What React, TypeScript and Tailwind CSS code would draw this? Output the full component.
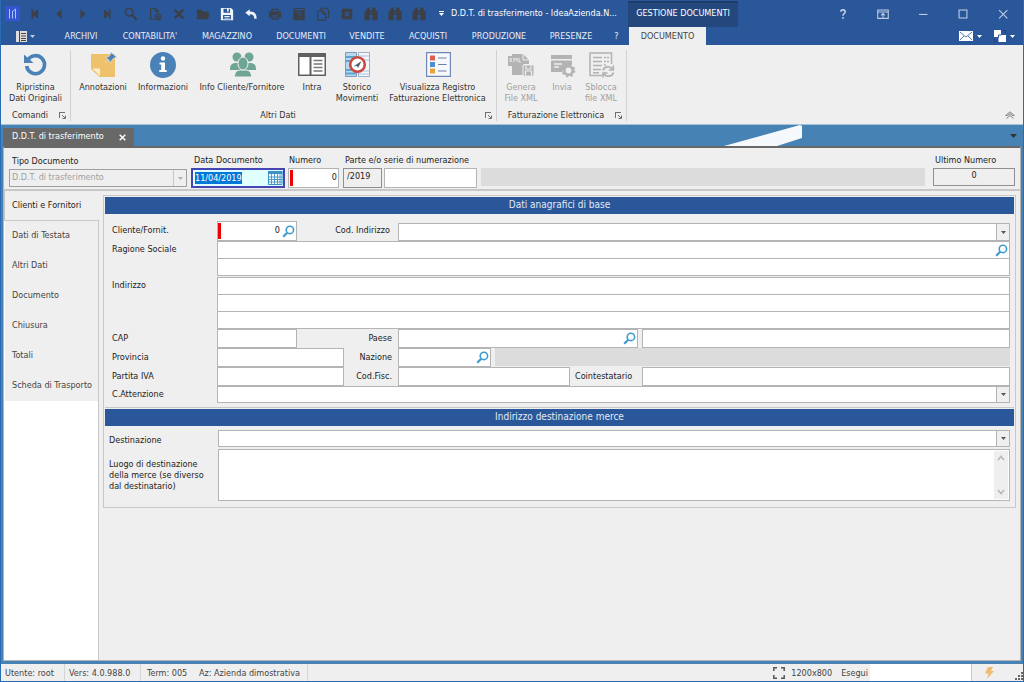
import { useEffect, useRef, type ReactNode } from "react";

/* ---------- small drawing helpers ---------- */

function Svg({ children, className = "size-[14px]", box = "0 0 16 16" }: { children: ReactNode; className?: string; box?: string }) {
  return (
    <svg viewBox={box} className={"block shrink-0 " + className} fill="currentColor" aria-hidden="true">
      {children}
    </svg>
  );
}

function Caret({ className = "" }: { className?: string }) {
  return (
    <Svg className={"h-[3px] w-[5px] " + className} box="0 0 5 3">
      <path d="M0 0h5L2.5 3z" />
    </Svg>
  );
}

function Launcher() {
  return (
    <button aria-label="Opzioni gruppo" className="text-[#707070]">
      <Svg className="size-[7px]" box="0 0 7 7">
        <path d="M0 0h6v1H1v5H0z" />
        <path d="M3 3l3 3M6.5 3.5v3h-3" fill="none" stroke="currentColor" />
      </Svg>
    </button>
  );
}

function Lens() {
  return (
    <Svg className="size-[13px] text-[#3f9bcb]" box="0 0 13 13">
      <circle cx="7.9" cy="4.9" r="3.7" fill="none" stroke="currentColor" strokeWidth="1.6" />
      <path d="M5.2 7.8L1.2 11.8" stroke="currentColor" strokeWidth="2.2" />
    </Svg>
  );
}

const binoculars = (
  <>
    <path d="M3 0.500h3.500v3h3v-3H13v3l2.500 2v9.500h-6V8.500h-3V15h-6V5.500l2.500-2z" />
    <path d="M7.300 5h1.400v2H7.300z" fill="#2a579a" />
  </>
);

const quickTools: { name: string; light?: boolean; icon: ReactNode }[] = [
  { name: "Primo", icon: <path d="M4 2.500h2v4.500L11.500 2.500v11L6 9v4.500H4z" /> },
  { name: "Precedente", icon: <path d="M11 2.500v11L5 8z" /> },
  { name: "Successivo", icon: <path d="M5 2.500v11L11 8z" /> },
  { name: "Ultimo", icon: <path d="M12 2.500h-2v4.500L4.500 2.500v11L10 9v4.500h2z" /> },
  {
    name: "Cerca",
    icon: (
      <g fill="none" stroke="currentColor">
        <circle cx="6" cy="6" r="4.300" strokeWidth="1.700" />
        <path d="M9.500 9.500l5 5" strokeWidth="2.600" />
      </g>
    ),
  },
  {
    name: "Nuovo",
    icon: (
      <g fill="none" stroke="currentColor" strokeWidth="1.300">
        <path d="M7.500 14H3V1.700h5.500L12 5v2.500M8.500 1.700V5H12" />
        <circle cx="11.500" cy="11.500" r="3.200" />
        <path d="M9.500 11.500h4M11.500 9.500v4" />
      </g>
    ),
  },
  { name: "Elimina", icon: <path d="M3 3l10 10M13 3L3 13" stroke="currentColor" strokeWidth="2.800" /> },
  { name: "Apri", icon: <path d="M1 14V3h5l1.500 2H14v2.500h2L13.500 14z" /> },
  {
    name: "Salva",
    light: true,
    icon: <path fillRule="evenodd" d="M1 1h11.500L15 3.500V15H1zM4 2v4.500h7.500V2H10v3H8V2zM3.500 9v5h9V9zM5 10.300h6v1H5zm0 1.900h6v1H5z" />,
  },
  { name: "Annulla", light: true, icon: <path d="M1.500 6.500L6.500 2.500v2.800C11.500 5 14.500 7.500 14.500 13.500h-2.700C11.800 9.700 10 8.200 6.500 8.200v2.500z" /> },
  {
    name: "Stampa",
    icon: <path fillRule="evenodd" d="M4 2h8v3h3v7h-3v2.500H4V12H1V5h3zm1.300 1.300V5h5.400V3.300zM5.300 9v4.200h5.400V9zM6 10h4v.8H6zm0 1.600h4v.8H6zM12 6.500h1.500v1H12z" />,
  },
  {
    name: "Guida",
    icon: (
      <>
        <path d="M1.500 3C1.500 1.500 2.500 1 4 1h10.500v14H1.500z" />
        <path d="M2.500 3h11M6 7.500C6 5 10 5 10 7.500 10 9 8 9 8 11M8 12.300v1.200" fill="none" stroke="#2a579a" strokeWidth="1.200" />
      </>
    ),
  },
  {
    name: "Copia",
    icon: <path d="M5.500 4V1.500h6L14.500 4v8H11M2 4.500h6l3 3V15H2zM7.500 4.500V8H11" fill="none" stroke="currentColor" strokeWidth="1.200" />,
  },
  {
    name: "Chiudi scheda",
    icon: (
      <>
        <path d="M2 2h12v12H2z" />
        <path d="M5.500 5.500l5 5M10.500 5.500l-5 5" stroke="#2a579a" strokeWidth="1.500" />
      </>
    ),
  },
  { name: "Ricerca 1", icon: binoculars },
  { name: "Ricerca 2", icon: binoculars },
  { name: "Ricerca 3", icon: binoculars },
];

const windowTools: { name: string; icon: ReactNode }[] = [
  { name: "Aiuto", icon: <path d="M5.500 5.500C5.500 2.500 10.500 2.500 10.500 5.500 10.500 7.500 8 7.500 8 10M8 11.500v2" strokeWidth="1.800" /> },
  { name: "Barra multifunzione", icon: <path d="M2 3.500h12v9.500H2zM2 5.800h12M8 12V7.500M5.800 9.500L8 7.300l2.200 2.200" /> },
  { name: "Riduci", icon: <path d="M3.500 8.500h9.500" /> },
  { name: "Ingrandisci", icon: <path d="M3.500 3.500h9v9h-9z" /> },
  { name: "Chiudi", icon: <path d="M3.500 3.500l9.500 9.500M13 3.500L3.500 13" /> },
];

const menus = [
  { label: "ARCHIVI", width: "w-[58px]" },
  { label: "CONTABILITA'", width: "w-[80px]" },
  { label: "MAGAZZINO", width: "w-[74px]" },
  { label: "DOCUMENTI", width: "w-[74px]" },
  { label: "VENDITE", width: "w-[58px]" },
  { label: "ACQUISTI", width: "w-[64px]" },
  { label: "PRODUZIONE", width: "w-[78px]" },
  { label: "PRESENZE", width: "w-[66px]" },
  { label: "?", width: "w-[25px]" },
];

/* ---------- ribbon icons ---------- */

const icons = {
  restore: (
    <g transform="translate(1 0)">
      <path d="M4.700 8.200A9 9 0 1 1 3.600 14" fill="none" stroke="#4a82b8" strokeWidth="3.600" />
      <path d="M1 2.500V11h9.500z" fill="#4a82b8" />
    </g>
  ),
  note: (
    <g transform="translate(2 0)">
      <path d="M0 2h24v23H8.500L0 17z" fill="#eec26d" />
      <path d="M1.500 16.500H9V24z" fill="#fbeccb" />
      <path d="M19.500 0l6 5-1.500 1-.8-.3-2.700 2.600.2 2.700-6-5.700 2.700-.2 2.300-2.900zM17.500 7.500L14 10.500l4.300-2.200z" fill="#4a82b8" stroke="#efefef" strokeWidth=".5" />
    </g>
  ),
  info: (
    <g transform="translate(1 0)">
      <circle cx="13" cy="13" r="13" fill="#4a82b8" />
      <circle cx="13" cy="6.500" r="2.200" fill="#fff" />
      <path d="M9.500 10.500h5.500V18h1.700v2H9.300v-2h1.900v-5.500H9.500z" fill="#fff" />
    </g>
  ),
  people: (
    <g fill="#6fa594" transform="translate(2 0)">
      <circle cx="7" cy="5" r="4.500" />
      <circle cx="19" cy="5" r="4.500" />
      <path d="M0 17c0-4 2-6 6-6h3l4 7H0zM26 17c0-4-2-6-6-6h-3l-4 7h13z" />
      <g stroke="#efefef">
        <path d="M4.500 25c0-4.500 2-7 6-7h5c4 0 6 2.500 6 7z" />
        <ellipse cx="13" cy="11.500" rx="5" ry="6.500" />
      </g>
    </g>
  ),
  intra: (
    <>
      <path d="M0 1h28v23H0z" fill="#606060" />
      <path d="M1.500 5h10v17.500h-10zM13.500 5h13v17.500h-13z" fill="#fff" />
      <path d="M15.500 8.500h9M15.500 12h9M15.500 15.500h9M15.500 19h9" stroke="#777" strokeWidth="1.300" />
    </>
  ),
  history: (
    <g transform="translate(2 0)">
      <path d="M.5.500h11v24H.500z" fill="#b9d8ee" stroke="#7d9dba" />
      <path d="M13.500.500h11v24h-11z" fill="#f3f7fb" stroke="#9db2c8" />
      <path d="M1 5h10M1 9h10M1 18h10M1 21.500h10" stroke="#5fa3d3" strokeWidth="2" />
      <path d="M14 4h10M14 8h10M14 19h10M14 22h10" stroke="#a9c5dd" />
      <circle cx="12.500" cy="12.500" r="7.300" fill="#fff" stroke="#cc4940" strokeWidth="2.600" />
      <path d="M8.500 14.500l8-5.500-3.500 7-1-2z" fill="#4c5d70" />
    </g>
  ),
  registry: (
    <g transform="translate(2 0)">
      <path d="M.6.6h23.800v23.800H.6z" fill="#f7f9fd" stroke="#7088b8" strokeWidth="1.200" />
      <path d="M4 3.500h5v5H4z" fill="#d9604e" />
      <path d="M4 10h5v5H4z" fill="#4b8fd0" />
      <path d="M4 16.500h5v5H4z" fill="#e8a33d" />
      <path d="M12 6h8.500M12 12.500h8.500M12 19h8.500" stroke="#6d7fa8" strokeWidth="1.200" />
    </g>
  ),
  xml: (
    <g fill="#b3b3b3" transform="translate(1 0)">
      <path d="M4 2h11l6 6v4h-5v11H4v-9H0V4h4z" />
      <path d="M15 2v6h6" fill="none" stroke="#efefef" />
      <path d="M1.500 6l2.500 4M4 6l-2.500 4M6 10V6l1.500 2L9 6v4M11 6v4h2" fill="none" stroke="#efefef" strokeWidth=".9" />
      <path d="M15 13h11v11H15z" stroke="#efefef" />
      <path d="M18 14v3h5v-3M17.500 23v-4h6v4" fill="none" stroke="#efefef" strokeWidth="1.200" />
    </g>
  ),
  send: (
    <g fill="#b3b3b3" transform="translate(2 0)">
      <path d="M1 3h21v4H1zM1 8.500h21V13h-3l-4 2-2 4-1 1H1z" />
      <path d="M4 12h8M4 15h5" stroke="#efefef" strokeWidth="1.300" />
      <circle cx="18.500" cy="18.500" r="4.200" fill="#efefef" stroke="#b3b3b3" strokeWidth="2.600" />
      <circle cx="18.500" cy="18.500" r="5.900" fill="none" stroke="#b3b3b3" strokeWidth="2" strokeDasharray="2.300 2.340" />
    </g>
  ),
  unlock: (
    <g fill="none" stroke="#b3b3b3" transform="translate(2 0)">
      <path d="M13 23.500H1V1h21.500v11" strokeWidth="1.500" />
      <path d="M4 5.500h9M4 9.500h9M4 13.500h9M4 17.500h8M4 20.800h6" strokeWidth="1.500" />
      <path d="M15 5.500h5M15 9.500h5M15 13h3" strokeDasharray="2 1" strokeWidth="1.500" />
      <path d="M14 18.500c1-4 7-5 9.500-1.500M24.500 20.500c-1 4-7 5-9.500 1.500M24.300 13.500V18h-4.500M14 25.500V21h4.500" strokeWidth="1.700" />
    </g>
  ),
};

function RibbonButton({ icon, lines, width, disabled }: { icon: ReactNode; lines: string[]; width: string; disabled?: boolean }) {
  return (
    <button disabled={disabled} className={"flex shrink-0 flex-col items-center gap-1 pt-[2px] " + width + (disabled ? " text-[#a0a0a0]" : "")}>
      <Svg className="h-[26px] w-[28px]" box="0 0 28 26">
        {icon}
      </Svg>
      <span className="text-center leading-[11px] whitespace-nowrap">
        {lines.map((l) => (
          <span key={l} className="block">
            {l}
          </span>
        ))}
      </span>
    </button>
  );
}

function RibbonGroup({ title, width, children }: { title: string; width: string; children: ReactNode }) {
  return (
    <section aria-label={title} className={"mt-[5px] mb-[3px] flex shrink-0 flex-col border-r border-[#d2d2d2] pr-1 " + width}>
      <div className="flex flex-1 items-start justify-between">{children}</div>
      <div className="flex items-center leading-[11px]">
        <span className="flex-1 text-center">{title}</span>
        <Launcher />
      </div>
    </section>
  );
}

/* ---------- form controls ---------- */

const box = "min-w-0 border border-[#b4b4b4] bg-white px-1 outline-none ";

function Combo({ id, className = "" }: { id: string; className?: string }) {
  return (
    <span className={"relative flex flex-1 " + className}>
      <select id={id} className={box + "w-full appearance-none"} />
      <span className="pointer-events-none absolute inset-y-0 right-0 flex w-[14px] items-center justify-center border border-[#b4b4b4] bg-[#efefef] text-[#555]">
        <Caret />
      </span>
    </span>
  );
}

function LookupField({ id, className = "", value, required }: { id: string; className?: string; value?: string; required?: boolean }) {
  return (
    <span className={"flex items-center border border-[#b4b4b4] bg-white " + className}>
      {required && <span className="my-px w-[3px] shrink-0 self-stretch bg-[#f00000]" />}
      <input id={id} defaultValue={value} className="min-w-0 flex-1 px-[2px] text-right outline-none" />
      <button aria-label="Cerca" className="mr-px shrink-0">
        <Lens />
      </button>
    </span>
  );
}

function Row({ label, id, height = "h-[19px]", children }: { label: string; id: string; height?: string; children: ReactNode }) {
  return (
    <div className={"flex " + height}>
      <label htmlFor={id} className="w-[105px] shrink-0 self-center">
        {label}
      </label>
      <div className="flex min-w-0 flex-1 items-stretch">{children}</div>
    </div>
  );
}

function SectionTitle({ children }: { children: ReactNode }) {
  return <h2 className="h-[17px] bg-[#2a579a] text-center text-[10px] leading-[16px] text-[#e3eaf5]">{children}</h2>;
}

/* ---------- page areas ---------- */

function TitleBar() {
  return (
    <header className="flex h-[27px] shrink-0 items-center text-white">
      <span className="ml-1 flex size-[15px] shrink-0 items-center justify-center bg-[#3355d1]">
        <Svg className="size-[11px] text-[#c3d0ff]" box="0 0 11 11">
          <path d="M2.500 1v9.500M5.500 3v7.500M8.500 1v9.500M5.500 3.500l3-2.500" fill="none" stroke="currentColor" strokeWidth=".9" />
        </Svg>
      </span>
      <div className="ml-[3px] flex">
        {quickTools.map((t) => (
          <button key={t.name} aria-label={t.name} className={"flex w-6 justify-center " + (t.light ? "text-[#f0f4fa]" : "text-[#3c3f45]")}>
            <Svg>{t.icon}</Svg>
          </button>
        ))}
        <button aria-label="Personalizza" className="flex w-5 flex-col items-center justify-center gap-px">
          <span className="h-px w-[5px] bg-white" />
          <Caret />
        </button>
      </div>
      <h1 className="w-[177px] shrink-0 whitespace-nowrap">D.D.T. di trasferimento - IdeaAzienda.N...</h1>
      <div className="mt-px flex w-[110px] shrink-0 items-center justify-center self-stretch border-t-2 border-[#1c3c69] bg-[#24477c] pb-[2px] whitespace-nowrap">
        GESTIONE DOCUMENTI
      </div>
      <div className="ml-auto flex text-[#c3d0e4]">
        {windowTools.map((t) => (
          <button key={t.name} aria-label={t.name} className="flex w-10 justify-center">
            <Svg>
              <g fill="none" stroke="currentColor" strokeWidth="1.200">
                {t.icon}
              </g>
            </Svg>
          </button>
        ))}
      </div>
    </header>
  );
}

function MenuBar() {
  return (
    <nav className="flex h-[18px] shrink-0 items-stretch text-[#e8edf5]">
      <button aria-label="Menu applicazione" className="flex w-[51px] shrink-0 items-center gap-[3px] pl-[15px]">
        <Svg className="size-[11px]" box="0 0 11 11">
          <path d="M0 0h11v11H0z" fill="#ddd" />
          <path d="M3.500 0v11M5 2.500h5M5 5h5M5 7.500h5M5 9.500h5" stroke="#444" />
        </Svg>
        <Caret className="text-[#c0cce0]" />
      </button>
      {menus.map((m) => (
        <button key={m.label} className={"shrink-0 pt-[2px] text-center whitespace-nowrap " + m.width}>
          {m.label}
        </button>
      ))}
      <button className="w-[77px] shrink-0 bg-[#efefef] pt-[2px] text-[#444]">DOCUMENTO</button>
      <div className="ml-auto flex items-center gap-1 pr-2 text-white">
        <button aria-label="Posta" className="flex items-center gap-1">
          <Svg className="h-[10px] w-[14px]" box="0 0 14 10">
            <path d="M0 0h14v10H0z" />
            <path d="M1 1l6 5 6-5M1 9l4-4M13 9L9 5" fill="none" stroke="#2a579a" strokeWidth=".8" />
          </Svg>
          <Caret />
        </button>
        <button aria-label="Finestre" className="ml-2 flex items-center gap-1">
          <Svg className="size-[12px]" box="0 0 12 12">
            <path d="M0 0h7v7H0zM4.500 5H12v7H4.500z" />
            <path d="M4.500 7.500V5H7" fill="none" stroke="#2a579a" />
            <path d="M8.500.500h3v2.500M.500 8.500v3H3" fill="none" stroke="#1d4480" />
          </Svg>
          <Caret />
        </button>
      </div>
    </nav>
  );
}

function Ribbon() {
  return (
    <div className="flex h-[79px] shrink-0 bg-[#efefef] text-[#333]">
      <RibbonGroup title="Comandi" width="w-[70px]">
        <RibbonButton width="w-[69px]" icon={icons.restore} lines={["Ripristina", "Dati Originali"]} />
      </RibbonGroup>
      <RibbonGroup title="Altri Dati" width="w-[426px]">
        <RibbonButton width="w-[64px]" icon={icons.note} lines={["Annotazioni"]} />
        <RibbonButton width="w-[56px]" icon={icons.info} lines={["Informazioni"]} />
        <RibbonButton width="w-[102px]" icon={icons.people} lines={["Info Cliente/Fornitore"]} />
        <RibbonButton width="w-[38px]" icon={icons.intra} lines={["Intra"]} />
        <RibbonButton width="w-[52px]" icon={icons.history} lines={["Storico", "Movimenti"]} />
        <RibbonButton width="w-[109px]" icon={icons.registry} lines={["Visualizza Registro", "Fatturazione Elettronica"]} />
      </RibbonGroup>
      <RibbonGroup title="Fatturazione Elettronica" width="w-[130px]">
        <RibbonButton disabled width="w-[48px]" icon={icons.xml} lines={["Genera", "File XML"]} />
        <RibbonButton disabled width="w-[34px]" icon={icons.send} lines={["Invia"]} />
        <RibbonButton disabled width="w-[44px]" icon={icons.unlock} lines={["Sblocca", "file XML"]} />
      </RibbonGroup>
      <button aria-label="Comprimi barra multifunzione" className="mt-auto mr-2 mb-[5px] ml-auto text-[#777]">
        <Svg className="h-[8px] w-[10px]" box="0 0 10 8">
          <path d="M.7 4.500L5 .8l4.300 3.700-1.800 0L5 2.700 2.500 4.500zM1.500 7.500L5 4.500l3.500 3" fill="none" stroke="currentColor" strokeWidth=".9" />
        </Svg>
      </button>
    </div>
  );
}

function DocumentHeader() {
  const date = useRef<HTMLInputElement>(null);
  useEffect(() => {
    date.current?.focus();
    date.current?.select();
  }, []);

  return (
    <div className="flex h-[43px] shrink-0 items-end border-b-2 border-[#c8c8c8] pr-[5px] pb-px pl-[5px] whitespace-nowrap">
      <div className="flex w-[178px] flex-col">
        <label htmlFor="tipo" className="pl-[3px] leading-[15px]">Tipo Documento</label>
        <span className="relative mb-px flex h-[18px]">
          <select id="tipo" disabled className="w-full appearance-none border border-[#a0a0a0] bg-[#efefef] px-[2px] text-[#a0a0a0] opacity-100">
            <option>D.D.T. di trasferimento</option>
          </select>
          <span className="pointer-events-none absolute inset-y-px right-px flex w-[13px] items-center justify-center border-l border-[#c8c8c8] text-[#b0b0b0]">
            <Caret />
          </span>
        </span>
      </div>
      <div className="ml-1 flex w-[94px] flex-col">
        <label htmlFor="data" className="pl-[3px] leading-[15px]">Data Documento</label>
        <span className="flex h-[20px] items-center border-2 border-[#4545b5] bg-[#e0ffff] pl-[2px]">
          <input
            id="data"
            ref={date}
            defaultValue="11/04/2019"
            className="min-w-0 flex-1 leading-[12px] caret-[#e08030] outline-none selection:bg-[#0078d7] selection:text-white"
          />
          <button aria-label="Calendario" className="shrink-0">
            <Svg className="h-[14px] w-[15px]" box="0 0 15 14">
              <path d="M.5.500h13.500v13H.500z" fill="#fff" stroke="#3b93c6" />
              <path d="M0 0h14.500v3H0z" fill="#3b93c6" />
              <path d="M3.500 3v10M6.500 3v10M9.500 3v10M12 3v10M0 6h14M0 8.500h14M0 11h14" stroke="#3b93c6" strokeWidth=".9" />
            </Svg>
          </button>
        </span>
      </div>
      <div className="ml-[3px] flex w-[51px] flex-col">
        <label htmlFor="numero" className="pl-px leading-[15px]">Numero</label>
        <span className="flex h-[20px] border border-[#b4b4b4] bg-white p-px">
          <span className="w-[3px] shrink-0 bg-[#f00000]" />
          <input id="numero" defaultValue="0" className="min-w-0 flex-1 text-right outline-none" />
        </span>
      </div>
      <div className="ml-1 flex flex-col">
        <label htmlFor="serie" className="pl-[2px] leading-[15px]">Parte e/o serie di numerazione</label>
        <span className="flex gap-[2px]">
          <input aria-label="Anno" readOnly defaultValue="/2019" className="h-[20px] w-[39px] border border-[#909090] bg-[#efefef] px-[3px] pb-1 outline-none" />
          <input id="serie" className={box + "h-[20px] w-[93px]"} />
        </span>
      </div>
      <div className="mb-[2px] ml-1 h-[18px] flex-1 bg-[#dcdcdc]" />
      <div className="ml-2 flex w-[82px] flex-col">
        <label htmlFor="ultimo" className="pl-[2px] leading-[15px]">Ultimo Numero</label>
        <input id="ultimo" readOnly defaultValue="0" className="mb-[2px] h-[18px] border border-[#909090] bg-[#efefef] pb-1 text-center outline-none" />
      </div>
    </div>
  );
}

function SideTabs() {
  const tabs = ["Clienti e Fornitori", "Dati di Testata", "Altri Dati", "Documento", "Chiusura", "Totali", "Scheda di Trasporto"];
  return (
    <nav className="flex w-[95px] shrink-0 flex-col border-r border-[#c8c8c8] bg-white text-[#444]">
      {tabs.map((t, i) => (
        <button
          key={t}
          className={"h-[30px] bg-[#efefef] pl-[7px] text-left whitespace-nowrap " + (i === 0 ? "-mr-px border-b border-l border-[#c8c8c8] text-[#222]" : "ml-px")}
        >
          {t}
        </button>
      ))}
    </nav>
  );
}

function CustomerForm() {
  return (
    <form className="m-1 flex min-w-0 flex-1 flex-col self-start border border-[#c8c8c8] p-px text-[#222]">
      <SectionTitle>Dati anagrafici di base</SectionTitle>
      <div className="border-b border-[#c8c8c8] pt-[7px] pr-1 pb-1 pl-[7px]">
        <Row label="Cliente/Fornit." id="cliente" height="h-[20px]">
          <LookupField id="cliente" value="0" required className="w-[80px] shrink-0" />
          <label htmlFor="codind" className="w-[101px] shrink-0 self-center pr-2 text-right">Cod. Indirizzo</label>
          <Combo id="codind" className="mt-[2px]" />
        </Row>
        <Row label="Ragione Sociale" id="ragione" height="h-[18px]">
          <LookupField id="ragione" className="flex-1" />
        </Row>
        <div className="flex h-[17px] pl-[105px]">
          <input aria-label="Ragione Sociale, seconda riga" className={box + "flex-1 border-t-0"} />
        </div>
        <div className="mt-px">
          <Row label="Indirizzo" id="indirizzo" height="h-[18px]">
            <input id="indirizzo" className={box + "flex-1"} />
          </Row>
        </div>
        <div className="flex h-[34px] flex-col pl-[105px]">
          <input aria-label="Indirizzo, seconda riga" className={box + "flex-1 border-t-0"} />
          <input aria-label="Indirizzo, terza riga" className={box + "flex-1 border-t-0"} />
        </div>
        <Row label="CAP" id="cap">
          <input id="cap" className={box + "w-[80px]"} />
          <label htmlFor="paese" className="w-[101px] shrink-0 self-center pr-[6px] text-right">Paese</label>
          <LookupField id="paese" className="w-[240px] shrink-0" />
          <input aria-label="Descrizione paese" className={box + "ml-1 flex-1"} />
        </Row>
        <Row label="Provincia" id="provincia">
          <input id="provincia" className={box + "w-[127px]"} />
          <label htmlFor="nazione" className="w-[54px] shrink-0 self-center pr-[6px] text-right">Nazione</label>
          <LookupField id="nazione" className="w-[93px] shrink-0" />
          <span className="mb-px ml-1 flex-1 bg-[#dcdcdc]" />
        </Row>
        <Row label="Partita IVA" id="piva">
          <input id="piva" className={box + "w-[127px]"} />
          <label htmlFor="codfisc" className="w-[54px] shrink-0 self-center pr-[6px] text-right">Cod.Fisc.</label>
          <input id="codfisc" className={box + "w-[172px]"} />
          <label htmlFor="coint" className="w-[72px] shrink-0 self-center pl-[5px]">Cointestatario</label>
          <input id="coint" className={box + "flex-1"} />
        </Row>
        <Row label="C.Attenzione" id="attenzione" height="h-[17px]">
          <Combo id="attenzione" />
        </Row>
      </div>
      <div className="h-px" />
      <SectionTitle>Indirizzo destinazione merce</SectionTitle>
      <div className="flex flex-col gap-[2px] pt-1 pr-1 pb-[5px] pl-1">
        <div className="flex h-[17px]">
          <label htmlFor="destinazione" className="w-[109px] shrink-0 self-end">Destinazione</label>
          <Combo id="destinazione" />
        </div>
        <div className="flex h-[52px]">
          <label htmlFor="luogo" className="w-[109px] shrink-0 self-center leading-[11px]">
            Luogo di destinazione
            <br />
            della merce (se diverso
            <br />
            dal destinatario)
          </label>
          <span className="flex flex-1 border border-[#b4b4b4] bg-white">
            <textarea id="luogo" className="min-w-0 flex-1 resize-none overflow-hidden px-1 outline-none" />
            <span className="m-px flex w-[14px] flex-col items-center justify-between bg-[#efefef] py-1 text-[#b8b8b8]">
              <Svg className="h-[6px] w-[8px]" box="0 0 8 6">
                <path d="M1 5l3-3.500L7 5" fill="none" stroke="currentColor" strokeWidth="1.600" />
              </Svg>
              <Svg className="h-[6px] w-[8px]" box="0 0 8 6">
                <path d="M1 1l3 3.500L7 1" fill="none" stroke="currentColor" strokeWidth="1.600" />
              </Svg>
            </span>
          </span>
        </div>
      </div>
    </form>
  );
}

function StatusBar() {
  return (
    <footer className="flex h-[17px] shrink-0 items-stretch bg-[#efefef] leading-[18px] whitespace-nowrap text-[#444]">
      <span className="w-[64px] border-r border-[#d4d4d4] pl-1">Utente: root</span>
      <span className="w-[76px] border-r border-[#d4d4d4] pl-1">Vers: 4.0.988.0</span>
      <span className="w-[52px] pl-[6px]">Term: 005</span>
      <span className="w-[115px] border-r border-[#d4d4d4] pl-[6px]">Az: Azienda dimostrativa</span>
      <span className="ml-auto flex items-center gap-[6px]">
        <Svg className="size-[12px] text-[#555]" box="0 0 12 12">
          <path d="M.8 4V.8H4M8 .8h3.200V4M11.200 8v3.200H8M4 11.200H.8V8" fill="none" stroke="currentColor" strokeWidth="1.500" />
        </Svg>
        1200x800
      </span>
      <label htmlFor="esegui" className="ml-[9px]">Esegui</label>
      <input id="esegui" className="ml-[2px] w-[102px] border-r border-[#c8c8c8] bg-white px-1 outline-none" />
      <button aria-label="Avvia" className="flex w-[34px] items-center justify-center text-[#eebb70]">
        <Svg className="h-[12px] w-[9px]" box="0 0 9 12">
          <path d="M3 0h5L6 4h3L2 12l1.500-5.500H0z" />
        </Svg>
      </button>
      <span className="flex w-[17px] items-end justify-end pb-px text-[#666]">
        <Svg className="size-[8px]" box="0 0 8 8">
          <path d="M6 0h2v2H6zM3 3h2v2H3zM6 3h2v2H6zM0 6h2v2H0zM3 6h2v2H3zM6 6h2v2H6z" />
        </Svg>
      </span>
    </footer>
  );
}

export default function App() {
  return (
    <div className="flex min-h-screen flex-col border-x border-b border-[#2a6cb4] bg-[#2a579a] font-['DejaVu_Sans_Condensed','DejaVu_Sans',sans-serif] text-[9px] text-[#222]">
      <TitleBar />
      <MenuBar />
      <Ribbon />
      <div className="flex flex-1 flex-col border-t border-[#a9c1d6] bg-[#4682b4] px-[2px] pb-[3px]">
        <div className="flex h-[21px] shrink-0 items-end">
          <div className="flex h-[18px] w-[131px] items-center justify-between bg-[#686868] pr-2 pl-[9px] text-white">
            <span>D.D.T. di trasferimento</span>
            <button aria-label="Chiudi scheda documento">
              <Svg className="size-[7px]" box="0 0 7 7">
                <path d="M.7.7l5.600 5.600M6.300.7L.7 6.300" stroke="currentColor" strokeWidth="1.400" />
              </Svg>
            </button>
          </div>
          <Svg className="mr-[207px] ml-auto h-[21px] w-[79px]" box="0 0 79 21">
            <path d="M0 21L76 0l2 1v12L53 21z" fill="#f6f9fc" />
          </Svg>
          <button aria-label="Elenco schede" className="mr-1 mb-2 text-[#333]">
            <Svg className="h-[4px] w-[7px]" box="0 0 7 4">
              <path d="M0 0h7L3.500 4z" />
            </Svg>
          </button>
        </div>
        <main className="flex flex-1 flex-col border-x border-t-2 border-b border-[#b4b4b4] border-t-[#686868] bg-[#efefef]">
          <DocumentHeader />
          <div className="flex flex-1">
            <SideTabs />
            <CustomerForm />
          </div>
        </main>
      </div>
      <StatusBar />
    </div>
  );
}
